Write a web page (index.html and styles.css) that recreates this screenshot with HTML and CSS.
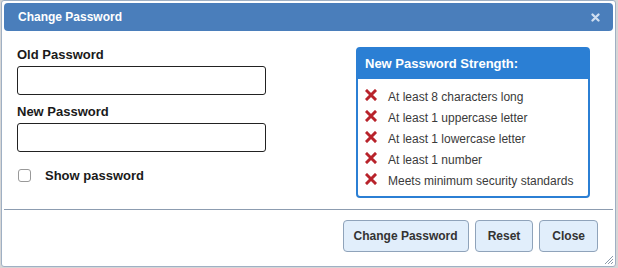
FILE: index.html
```html
<!DOCTYPE html>
<html>
<head>
<meta charset="utf-8">
<link rel="stylesheet" href="styles.css">
</head>
<body>
<div class="dialog">
  <div class="titlebar">
    <span class="title">Change Password</span>
    <svg class="close" width="9" height="9" viewBox="0 0 9 9"><path d="M1.5 1.5L7.5 7.5M7.5 1.5L1.5 7.5" stroke="#cfdef0" stroke-width="2.3" stroke-linecap="round"/></svg>
  </div>
  <div class="content">
    <div class="form">
      <label class="label">Old Password</label>
      <input class="input" type="password">
      <label class="label">New Password</label>
      <input class="input" type="password">
      <div class="show">
        <span class="checkbox"></span>
        <span class="show-text">Show password</span>
      </div>
    </div>
    <div class="strength">
      <div class="strength-head">New Password Strength:</div>
      <ul class="rules">
        <li><svg class="x" width="12" height="12" viewBox="0 0 12 12"><path d="M2 2L10 10M10 2L2 10" stroke="#b8232b" stroke-width="3" stroke-linecap="square"/></svg><span>At least 8 characters long</span></li>
        <li><svg class="x" width="12" height="12" viewBox="0 0 12 12"><path d="M2 2L10 10M10 2L2 10" stroke="#b8232b" stroke-width="3" stroke-linecap="square"/></svg><span>At least 1 uppercase letter</span></li>
        <li><svg class="x" width="12" height="12" viewBox="0 0 12 12"><path d="M2 2L10 10M10 2L2 10" stroke="#b8232b" stroke-width="3" stroke-linecap="square"/></svg><span>At least 1 lowercase letter</span></li>
        <li><svg class="x" width="12" height="12" viewBox="0 0 12 12"><path d="M2 2L10 10M10 2L2 10" stroke="#b8232b" stroke-width="3" stroke-linecap="square"/></svg><span>At least 1 number</span></li>
        <li><svg class="x" width="12" height="12" viewBox="0 0 12 12"><path d="M2 2L10 10M10 2L2 10" stroke="#b8232b" stroke-width="3" stroke-linecap="square"/></svg><span>Meets minimum security standards</span></li>
      </ul>
    </div>
  </div>
  <div class="buttons">
    <button class="btn btn-wide">Change Password</button>
    <button class="btn">Reset</button>
    <button class="btn">Close</button>
  </div>
  <svg class="grip" width="12" height="12" viewBox="0 0 12 12"><path d="M11 3L3 11M11 6L6 11M11 9L9 11" stroke="#8a99aa" stroke-width="1"/></svg>
</div>
</body>
</html>
```
FILE: styles.css
```css
html, body {
  margin: 0;
  padding: 0;
  background: #d6d6d6;
  font-family: "Liberation Sans", Arial, sans-serif;
}
.dialog {
  position: relative;
  box-sizing: border-box;
  width: 615px;
  height: 267px;
  margin-left: 1px;
  background: #fff;
  border: 1px solid #9fb0c4;
  border-radius: 3px;
  padding: 2px;
  display: flex;
  flex-direction: column;
}
.titlebar {
  height: 28px;
  background: #4a7ebb;
  border-radius: 4px;
  display: flex;
  align-items: center;
  justify-content: space-between;
  padding: 0 13px 0 14px;
  flex: none;
}
.title {
  color: #fff;
  font-weight: bold;
  font-size: 12px;
}
.close { display: block; }
.content {
  display: flex;
  justify-content: space-between;
  padding: 16px 23px 0 13px;
  height: 162px;
  border-bottom: 1px solid #8c9cb0;
  flex: none;
}
.form {
  display: flex;
  flex-direction: column;
  width: 249px;
}
.label {
  font-weight: bold;
  font-size: 13px;
  color: #1a1a1a;
  line-height: 15px;
  margin-bottom: 4px;
}
.input {
  box-sizing: border-box;
  width: 249px;
  height: 29px;
  border: 1px solid #222;
  border-radius: 3px;
  margin: 0 0 9px 0;
  padding: 0;
}
.show {
  display: flex;
  align-items: center;
  margin-top: 7px;
}
.checkbox {
  box-sizing: border-box;
  width: 13px;
  height: 13px;
  border: 1px solid #999;
  border-radius: 3px;
  margin-left: 1px;
  background: #fff;
}
.show-text {
  font-weight: bold;
  font-size: 13px;
  color: #1a1a1a;
  margin-left: 14px;
}
.strength {
  box-sizing: border-box;
  width: 234px;
  height: 151px;
  border: 2px solid #2b7fd4;
  border-radius: 4px;
  align-self: flex-start;
}
.strength-head {
  background: #2b7fd4;
  color: #fff;
  font-weight: bold;
  font-size: 13px;
  height: 30px;
  line-height: 30px;
  padding-left: 7px;
}
.rules {
  list-style: none;
  margin: 0;
  padding: 8px 0 0 7px;
}
.rules li {
  display: flex;
  align-items: center;
  height: 20.8px;
  font-size: 12px;
  color: #3a3a3a;
}
.x {
  flex: none;
  margin-right: 11px;
  margin-top: -4px;
}
.buttons {
  display: flex;
  justify-content: flex-end;
  gap: 6px;
  padding: 10px 15px 0 0;
}
.btn {
  box-sizing: border-box;
  height: 32px;
  padding: 0 12px;
  background: #e1eefb;
  border: 1px solid #8fa3ba;
  border-radius: 4px;
  font-family: "Liberation Sans", Arial, sans-serif;
  font-weight: bold;
  font-size: 12px;
  color: #333;
}
.btn-wide {
  padding: 0 10px;
}
.grip {
  position: absolute;
  right: 1px;
  bottom: 1px;
}
```
